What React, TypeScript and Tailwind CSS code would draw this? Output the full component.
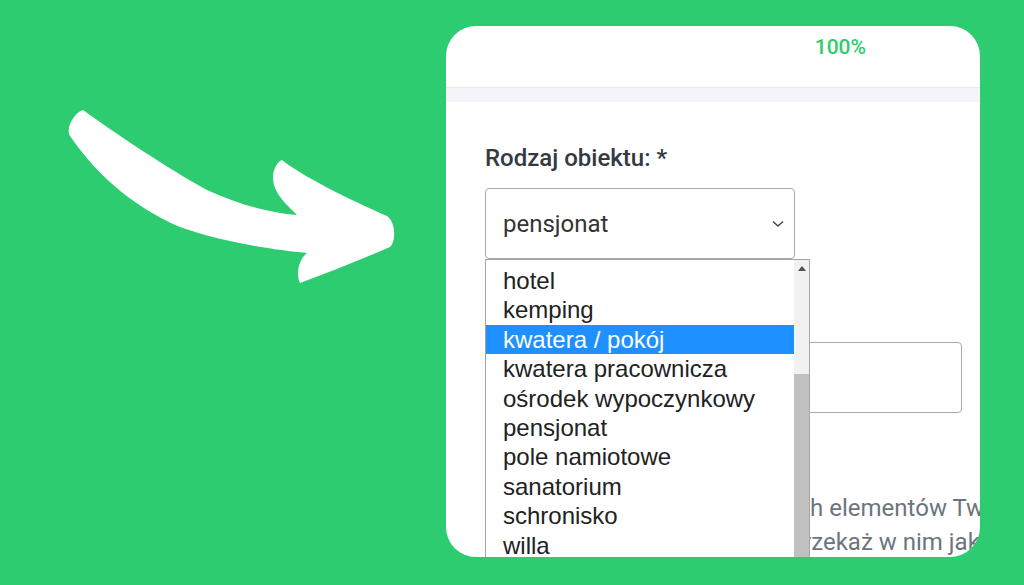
const options = [
  "hotel",
  "kemping",
  "kwatera / pokój",
  "kwatera pracownicza",
  "ośrodek wypoczynkowy",
  "pensjonat",
  "pole namiotowe",
  "sanatorium",
  "schronisko",
  "willa",
  "inny",
];

function Arrow() {
  return (
    <svg width="446" height="585" viewBox="0 0 446 585" className="block shrink-0">
      <path
        fill="#ffffff"
        d="M83,110 C115,133 170,170 207,190 C240,205 270,213 297,215 C285,203 272,192 273,175 C274,168 278,161 282,160 C300,175 350,200 387,216 C396,222 396,242 390,247 C360,260 330,272 300,283 C296,275 298,260 307,253 C270,250 215,240 180,227 C140,210 100,180 70,136 C65,128 75,112 83,110 Z"
      />
    </svg>
  );
}

function Dropdown() {
  return (
    <div className="absolute left-0 top-[71px] w-[325px] h-[320px] bg-white border border-[#a5a5a5] flex font-['Liberation_Sans',Arial,sans-serif] text-[24px] text-[#222]">
      <ul className="flex-1 pt-[6px]">
        {options.map((o) => (
          <li
            key={o}
            className={
              o === "kwatera / pokój"
                ? "h-[29.4px] leading-[29.4px] pl-[17px] bg-[#1e90ff] text-white whitespace-nowrap"
                : "h-[29.4px] leading-[29.4px] pl-[17px] whitespace-nowrap"
            }
          >
            {o}
          </li>
        ))}
      </ul>
      <div className="w-[15px] bg-[#f1f1f1] flex flex-col">
        <div className="h-[16px] flex items-center justify-center">
          <svg width="8" height="5" viewBox="0 0 8 5">
            <path d="M0,5 L4,0 L8,5 Z" fill="#505050" />
          </svg>
        </div>
        <div className="mt-[98px] flex-1 bg-[#c1c1c1]" />
      </div>
    </div>
  );
}

export default function App() {
  return (
    <div className="w-[1024px] h-[585px] bg-[#2ecc71] flex overflow-hidden font-['Roboto',sans-serif]">
      <Arrow />
      <div className="mt-[26px] w-[534px] h-[531px] bg-white rounded-[30px] overflow-hidden flex flex-col shrink-0">
        {/* progress header */}
        <div className="h-[61px] shrink-0 flex justify-end pr-[114px] pt-[9px]">
          <span className="text-[21px] leading-[24px] font-medium text-[#2ecc71]">100%</span>
        </div>
        <div className="h-[15px] shrink-0 bg-[#f3f5f8] border-t border-[#e6eaf0]" />

        {/* form */}
        <div className="shrink-0 pl-[39px] pr-[18px] pt-[42px]">
          <label className="block text-[24px] leading-[28px] font-medium text-[#343a40]">
            Rodzaj obiektu: *
          </label>
          <div className="relative mt-[16px] w-[310px]">
            <div className="h-[71px] border border-[#a9a9a9] rounded-[4px] flex items-center justify-between pl-[17px] pr-[10px] text-[24px] text-[#333]">
              <span>pensjonat</span>
              <svg width="12" height="8" viewBox="0 0 12 8">
                <path d="M1,1.5 L6,6 L11,1.5" fill="none" stroke="#444" strokeWidth="1.4" />
              </svg>
            </div>
            <Dropdown />
          </div>

          <div className="mt-[40px]">
            <label className="block text-[24px] leading-[28px] font-medium text-[#343a40]">
              Nazwa obiektu: *
            </label>
            <div className="mt-[15px] h-[71px] border border-[#a9a9a9] rounded-[4px]" />
          </div>

          <div className="mt-[78px] text-[24px] leading-[34px] text-[#6c757d] whitespace-nowrap">
            <p>Dodaj udane zdjęcia wszystkich elementów Twojego obiektu</p>
            <p>Napisz krótki opis budynku i przekaż w nim jak najwięcej informacji</p>
          </div>
        </div>
      </div>
    </div>
  );
}
